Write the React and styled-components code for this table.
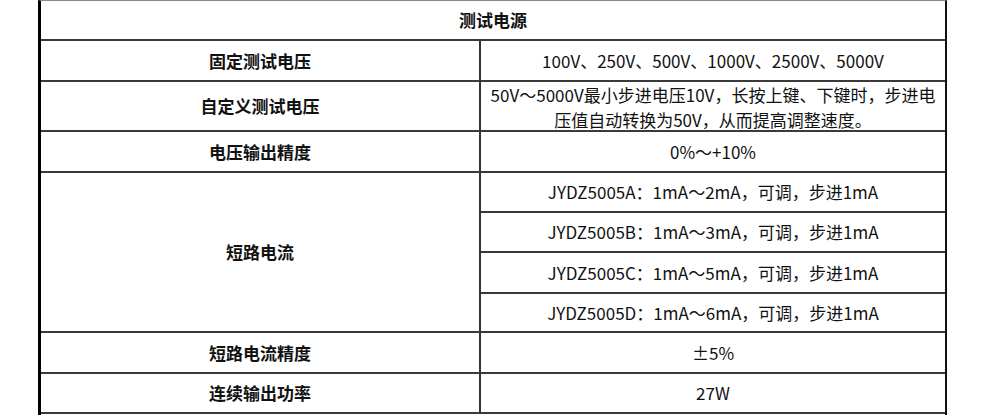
import React from "react";
import styled, { createGlobalStyle } from "styled-components";

const GlobalStyle = createGlobalStyle`
  html, body {
    margin: 0;
    padding: 0;
    background: #fff;
    overflow: hidden;
  }
  body {
    font-family: "Noto Sans CJK SC", "Noto Sans", sans-serif;
    color: #111;
  }
`;

const currentRows = [
  "JYDZ5005A：1mA～2mA，可调，步进1mA",
  "JYDZ5005B：1mA～3mA，可调，步进1mA",
  "JYDZ5005C：1mA～5mA，可调，步进1mA",
  "JYDZ5005D：1mA～6mA，可调，步进1mA",
];

export default function App() {
  return (
    <>
      <GlobalStyle />
      <Sheet>
        <Title>测试电源</Title>

        <Label>固定测试电压</Label>
        <Value>100V、250V、500V、1000V、2500V、5000V</Value>

        <Label>自定义测试电压</Label>
        <Value $lines>
          50V～5000V最小步进电压10V，长按上键、下键时，步进电
          <br />
          压值自动转换为50V，从而提高调整速度。
        </Value>

        <Label>电压输出精度</Label>
        <Value>0%～+10%</Value>

        <Label $span={4}>短路电流</Label>
        {currentRows.map((text) => (
          <Value key={text}>{text}</Value>
        ))}

        <Label>短路电流精度</Label>
        <Value>±5%</Value>

        <Label>连续输出功率</Label>
        <Value>27W</Value>
      </Sheet>
    </>
  );
}

const Sheet = styled.div`
  box-sizing: border-box;
  width: 909px;
  margin-left: 38px;
  border-top: 1px solid #8a8a8a;
  border-left: 3px solid #000;
  border-right: 2px solid #111;
  display: grid;
  grid-template-columns: 440px 1fr;
  grid-template-rows: 40px 41px 50px 41px 40px 40px 41px 39px 41px 40px 20px;
  font-size: 17px;
`;

const Cell = styled.div`
  box-sizing: border-box;
  display: flex;
  align-items: center;
  justify-content: center;
  text-align: center;
  border-bottom: 2px solid #3a3a3a;
  white-space: nowrap;
`;

const Title = styled(Cell)`
  grid-column: 1 / -1;
  font-weight: 700;
  padding-bottom: 1px;
`;

const Label = styled(Cell)`
  grid-column: 1;
  grid-row: ${(p) => (p.$span ? `span ${p.$span}` : "auto")};
  border-right: 2px solid #333;
  font-weight: 700;
  padding-bottom: 1px;
`;

const Value = styled(Cell)`
  grid-column: 2;
  line-height: ${(p) => (p.$lines ? "25px" : "normal")};
  padding-bottom: ${(p) => (p.$lines ? "2px" : "1px")};
  display: ${(p) => (p.$lines ? "block" : "flex")};
  padding-top: ${(p) => (p.$lines ? "0" : "0")};
`;
